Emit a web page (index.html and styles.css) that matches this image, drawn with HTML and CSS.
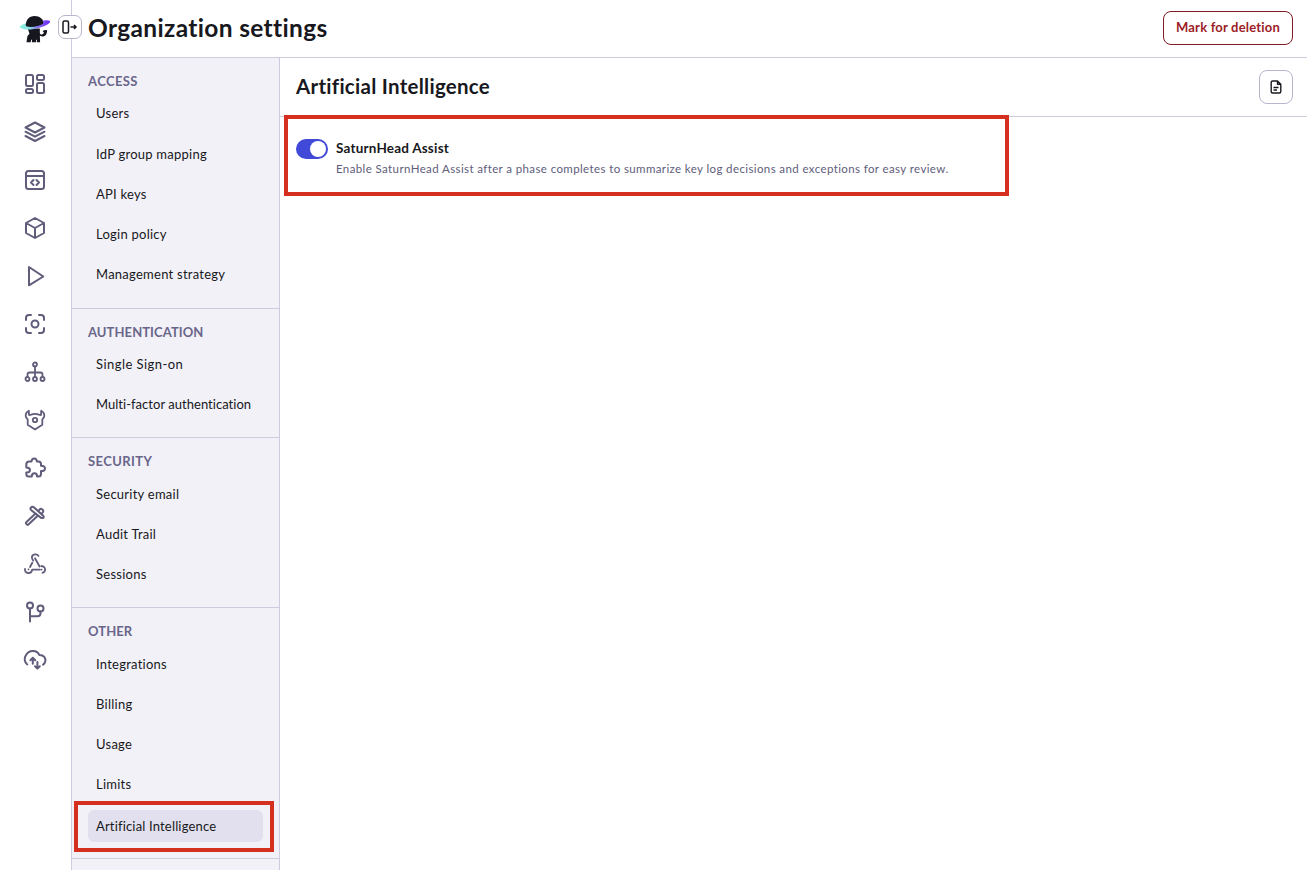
FILE: index.html
```html
<!DOCTYPE html>
<html lang="en">
<head>
<meta charset="utf-8">
<title>Organization settings</title>
<link rel="stylesheet" href="styles.css">
</head>
<body>
<div class="app">
  <nav class="rail">
    <svg class="logo" viewBox="0 0 32 30">
      <defs><linearGradient id="ring" x1="0" x2="1" y1="0" y2="0"><stop offset="0" stop-color="#8ff5dc"/><stop offset=".35" stop-color="#8bd9e4"/><stop offset=".6" stop-color="#8a70ef"/><stop offset="1" stop-color="#6b24f5"/></linearGradient></defs>
      <path fill="#16161f" d="M8.500 14h12.500v4.500c.3 1.200 1 1.700 1.900 1.700 1.400 0 2.300-1 2.200-2.300l-1.100-.9 1-1.200 3.500-.4c.2 4-1.700 7-5 6.800l-2.500-.8.300 6.800h-3.400v-2.600h-.8v2.600h-4.300v-2.600h-.9l-.3 2.600H7.200l1-6.500 2.100-2.300z"/>
      <path fill="url(#ring)" d="M0 12.400C2 9.500 8 8 14 7.600c7-1 14-3.100 17.500-1.400 1 2-3.500 4.600-10 6.800-8 2.500-18 3.300-21.500-.6z"/>
      <path fill="#16161f" d="M6.500 11.500C6 5 10 1 15.500 1S25 4.500 24.500 9c-4.500 2.700-13 4.500-18 2.500z"/>
    </svg>
    <div class="icons">
      <svg class="icon" viewBox="0 0 24 24"><rect x="3" y="3" width="7" height="11" rx="1.500"/><rect x="14" y="3" width="7" height="5" rx="1.500"/><rect x="3" y="17" width="7" height="4" rx="1.500"/><rect x="14" y="11" width="7" height="10" rx="1.500"/></svg>
      <svg class="icon" viewBox="0 0 24 24"><path d="M12 2.500 21.500 7.500 12 12.500 2.500 7.500zM2.500 11.700l9.500 5 9.500-5M2.500 16l9.500 5 9.500-5"/></svg>
      <svg class="icon" viewBox="0 0 24 24"><rect x="3" y="3" width="18" height="18" rx="2.500"/><path d="M3 8h18M10.500 12 8 14.500l2.500 2.500M13.500 12l2.500 2.500-2.500 2.500"/></svg>
      <svg class="icon" viewBox="0 0 24 24"><path d="M12 2 21 7v10l-9 5-9-5V7zM3 7l9 5 9-5M12 12v10"/></svg>
      <svg class="icon" viewBox="0 0 24 24"><path d="M6 3v18.300L20.300 12.500z"/></svg>
      <svg class="icon" viewBox="0 0 24 24"><circle cx="12" cy="12" r="3.500"/><path d="M3 8V6a3 3 0 0 1 3-3h2M16 3h2a3 3 0 0 1 3 3v2M21 16v2a3 3 0 0 1-3 3h-2M8 21H6a3 3 0 0 1-3-3v-2"/></svg>
      <svg class="icon" viewBox="0 0 24 24"><g class="thin"><circle cx="12" cy="4.500" r="2"/><circle cx="4.500" cy="19" r="2"/><circle cx="12" cy="19" r="2"/><circle cx="19.500" cy="19" r="2"/><path d="M12 6.500V17M4.500 17v-2.500a2 2 0 0 1 2-2h11a2 2 0 0 1 2 2V17"/></g></svg>
      <svg class="icon" viewBox="0 0 24 24"><g class="thin"><path d="M5.800 2.700C3.500 4 2.300 6.500 2.900 9l1.800 2.500v5.300L12 21.500l7.300-4.700v-5.300L21.100 9c.6-2.500-.6-5-2.900-6.300L18 7l-2.200-.3c-2.400-1-5.200-1-7.600 0L6 7z"/><circle cx="12" cy="12" r="2.200"/></g></svg>
      <svg class="icon" viewBox="0 0 24 24"><path d="M3.300 8.500q0-3 3-3h2.200C8.700 3.500 9.600 2.400 11.200 2.400s2.500 1.100 2.700 3.100h1.600q2.500 0 2.500 2.500v1.700c2.500.1 4 1.200 4 2.700s-1.500 2.600-4 2.700V18q0 2.600-2.600 2.600h-1.300c0-2.200-.9-3.400-2.600-3.400S8.800 18.400 8.800 20.600H5.900q-2.600 0-2.600-2.600v-1.500c2.400 0 3.700-.9 3.700-2.500s-1.300-2.500-3.700-2.500z"/></svg>
      <svg class="icon" viewBox="0 0 24 24"><path d="M8 3.500c.8-.9 2-.9 3.100-.1l8.800 8c1.600 1.700.5 3.200-1.800 2.500L8.300 6.200C7.300 5.200 7.200 4.300 8 3.500zM12.300 9.800 3.200 18.300c-.9 1 1 3.300 2.200 2.300l9.600-9.100M15.500 6.800l1.300-1.500c1.500-1.300 4.200.8 3.200 2.700l-1.300 1.700"/></svg>
      <svg class="icon" viewBox="0 0 24 24"><g class="thin"><path d="M15.500 3.900C14.200 1.500 9 1.700 8.900 5.300c0 1.500.5 2.400 1.300 3.200M9.300 10.800 7 15M12 6.300l4.600 8.200M18.500 14c3.200.2 4.300 3 3.300 5-.5 1-1.300 1.600-2.300 1.800M2 17c-.8 4.900 6.500 5.600 7.200.6h7.600M5.500 17.300h.1M18.500 17.600h.1"/></g></svg>
      <svg class="icon" viewBox="0 0 24 24"><circle cx="7" cy="5.500" r="3"/><circle cx="17.500" cy="8.500" r="3"/><path d="M7 8.500V21.500M7 16.300h7.500a3 3 0 0 0 3-3v-1.800"/></svg>
      <svg class="icon" viewBox="0 0 24 24"><path d="M4.300 16.500A6.700 6.700 0 0 1 3 7.200C6 1 14.500 2 16.300 7c4.700-.2 6.500 3.300 6 6.200-.3 1.500-1 2.500-2.300 3.500M9.800 15.800v-5.300M7.400 12.200l2.400-2.400 2.400 2.400M14.400 14v6M12 18.200l2.400 2.400 2.400-2.400"/></svg>
    </div>
    <button class="expand" aria-label="Expand"><svg viewBox="0 0 18 18"><rect x="2" y="3" width="5.500" height="12" rx="1.500"/><path d="M9.500 9h5.500M13 7l2 2-2 2"/></svg></button>
  </nav>
  <div class="workspace">
    <header class="topbar"><h1>Organization settings</h1><button class="danger">Mark for deletion</button></header>
    <div class="body">
      <aside class="sidebar">
        <section class="access"><h3 class="wide">ACCESS</h3><a>Users</a><a>IdP group mapping</a><a>API keys</a><a>Login policy</a><a>Management strategy</a></section>
        <section><h3>AUTHENTICATION</h3><a class="loose">Single Sign-on</a><a class="tight">Multi-factor authentication</a></section>
        <section class="low"><h3 class="wide">SECURITY</h3><a>Security email</a><a>Audit Trail</a><a>Sessions</a></section>
        <section class="low"><h3>OTHER</h3><a>Integrations</a><a>Billing</a><a>Usage</a><a>Limits</a><a class="active">Artificial Intelligence</a><div class="mark mark-nav"></div></section>
      </aside>
      <main>
        <div class="pagehead"><h2>Artificial Intelligence</h2><button class="doc" aria-label="Documentation"><svg viewBox="0 0 16 16"><path d="M9.500 2H4.700Q3.200 2 3.200 3.500v9Q3.200 14 4.700 14h6.600q1.500 0 1.500-1.500V5.300zM9.500 2v3.300h3.300M5.500 8.500h5M5.500 11h3.500"/></svg></button></div>
        <div class="setting"><div class="toggle"><i></i></div><div class="copy"><strong>SaturnHead Assist</strong><p>Enable SaturnHead Assist after a phase completes to summarize key log decisions and exceptions for easy review.</p></div><div class="mark mark-setting"></div></div>
      </main>
    </div>
  </div>
</div>
</body>
</html>
```
FILE: styles.css
```css
* { box-sizing: border-box; }
body { margin: 0; background: #fff; color: #181820; font-family: Lato, sans-serif; font-size: 13px; }
h1, h2, h3, p { margin: 0; white-space: nowrap; }
button { background: #fff; padding: 0; font: inherit; display: flex; align-items: center; justify-content: center; }
.app { display: flex; height: 870px; overflow: hidden; }
.rail { position: relative; width: 72px; border-right: 1px solid #cdcbdd; padding-top: 15px; flex: none; }
.logo { display: block; width: 32px; height: 29px; margin-left: 19px; }
.icons { display: flex; flex-direction: column; align-items: center; gap: 24px; padding-top: 28px; width: 70px; }
.icon { width: 24px; height: 24px; fill: none; stroke: #605d7b; stroke-width: 2; stroke-linejoin: round; stroke-linecap: round; }
.thin { stroke-width: 1.800; }
.expand { position: absolute; left: 58px; top: 15px; width: 24px; height: 24px; border: 1px solid #b8b5cc; border-radius: 7px; }
.expand svg { width: 18px; height: 18px; fill: none; stroke: #181820; stroke-width: 1.500; flex: none; }
.workspace { flex: 1; display: flex; flex-direction: column; min-width: 0; }
.topbar { height: 58px; border-bottom: 1px solid #cdcbdd; display: flex; align-items: center; justify-content: space-between; padding: 0 14px 2px 16px; }
h1 { font-size: 24.500px; line-height: 32px; letter-spacing: .34px; }
.danger { width: 130px; height: 34px; padding-bottom: 2px; border: 1px solid #841b24; border-radius: 8px; color: #9b1c27; font-weight: 700; letter-spacing: .19px; }
.body { flex: 1; display: flex; min-height: 0; }
.sidebar { width: 208px; background: #f2f1f8; border-right: 1px solid #cdcbdd; display: grid; grid-template-rows: 251px 129px 170px 251px; align-content: start; flex: none; }
section { position: relative; border-bottom: 1px solid #cdcbdd; padding: 13px 16px 0; }
h3 { font-size: 13px; line-height: 20px; height: 26px; color: #69668a; letter-spacing: .08px; }
.low h3 { height: 27px; }
.wide { letter-spacing: .4px; }
.sidebar a { display: flex; align-items: center; height: 32px; margin-bottom: 8px; padding: 0 8px; border-radius: 6px; white-space: nowrap; letter-spacing: .25px; }
.access h3 + a { margin-bottom: 9px; }
.sidebar .loose { letter-spacing: .45px; }
.sidebar .tight { letter-spacing: .03px; }
.sidebar .active { background: #e2e0ee; margin-top: 10px; padding-bottom: 1px; letter-spacing: .17px; }
.sidebar a:has(+ .active) { margin-bottom: 0; }
.mark { position: absolute; border: 4px solid #d52f20; pointer-events: none; }
.mark-nav { left: 2px; top: 193px; width: 200px; height: 51px; }
main { flex: 1; min-width: 0; }
.pagehead { height: 59px; border-bottom: 1px solid #cdcbdd; padding: 0 14px 0 16px; display: flex; align-items: center; justify-content: space-between; }
h2 { font-size: 20.500px; line-height: 28px; padding-bottom: 2px; letter-spacing: .27px; }
.doc { width: 34px; height: 34px; border: 1px solid #b8b5cc; border-radius: 8px; }
.doc svg { width: 16px; height: 16px; fill: none; stroke: #181820; stroke-width: 1.400; stroke-linejoin: round; }
.setting { position: relative; display: flex; gap: 8px; padding: 22px 16px; }
.toggle { width: 32px; height: 20px; border-radius: 10px; background: #4149d9; padding: 2px; display: flex; justify-content: flex-end; flex: none; }
.toggle i { width: 16px; height: 16px; border-radius: 50%; background: #fff; }
.copy strong { display: block; line-height: 18px; height: 20px; font-size: 13.500px; letter-spacing: .2px; }
.copy p { font-size: 11.500px; line-height: 20px; color: #605d7b; letter-spacing: .388px; }
.mark-setting { left: 4px; top: -2px; width: 725px; height: 81px; }
```
